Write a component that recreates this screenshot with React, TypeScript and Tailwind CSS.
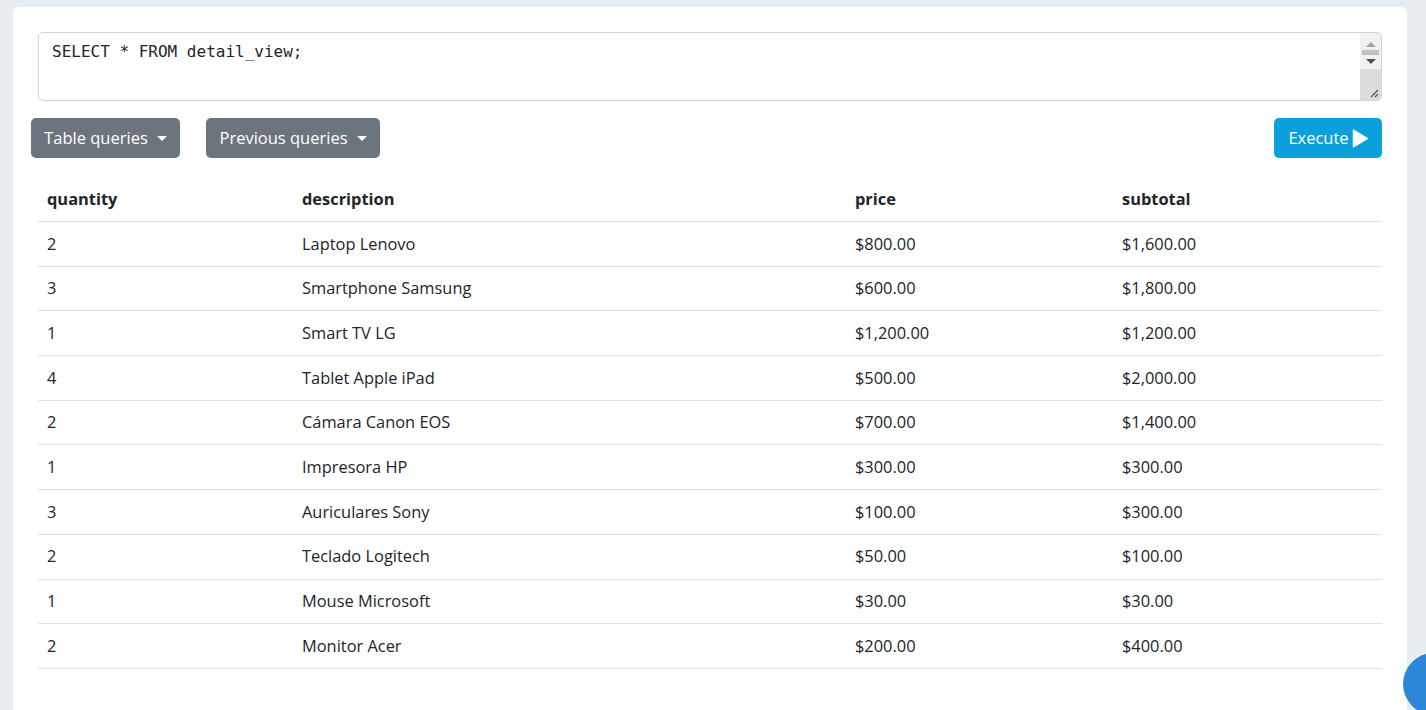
import React from "react";

const rows = [
  { q: 2, d: "Laptop Lenovo", p: "$800.00", s: "$1,600.00" },
  { q: 3, d: "Smartphone Samsung", p: "$600.00", s: "$1,800.00" },
  { q: 1, d: "Smart TV LG", p: "$1,200.00", s: "$1,200.00" },
  { q: 4, d: "Tablet Apple iPad", p: "$500.00", s: "$2,000.00" },
  { q: 2, d: "Cámara Canon EOS", p: "$700.00", s: "$1,400.00" },
  { q: 1, d: "Impresora HP", p: "$300.00", s: "$300.00" },
  { q: 3, d: "Auriculares Sony", p: "$100.00", s: "$300.00" },
  { q: 2, d: "Teclado Logitech", p: "$50.00", s: "$100.00" },
  { q: 1, d: "Mouse Microsoft", p: "$30.00", s: "$30.00" },
  { q: 2, d: "Monitor Acer", p: "$200.00", s: "$400.00" },
];

const cols = "grid grid-cols-[255px_553px_267px_1fr] items-center";

function Caret() {
  return (
    <span className="ml-[9px] inline-block h-0 w-0 border-x-[5px] border-t-[5px] border-x-transparent border-t-white align-middle" />
  );
}

export default function App() {
  return (
    <div
      className="relative h-[710px] w-full overflow-hidden bg-[#e7edf1] pl-[13px] pr-[19px] pt-[7px] text-[#212529]"
      style={{ fontFamily: '"Open Sans", "Noto Sans", sans-serif' }}
    >
      <div className="h-[720px] rounded-md bg-white pt-[25px]">
        {/* query box */}
        <div className="mx-[25px] flex h-[69px] overflow-hidden rounded-[5px] border border-[#ced4da]">
          <div className="flex-1 px-[13px] py-[7px] font-['DejaVu_Sans_Mono',monospace] text-[16px] leading-6 text-[#212529]">
            SELECT * FROM detail_view;
          </div>
          <div className="flex w-[21px] flex-col bg-[#f1f1f1]">
            <div className="flex h-[17px] items-end justify-center pb-[3px]">
              <span className="h-0 w-0 border-x-[5px] border-b-[5px] border-x-transparent border-b-[#a3a3a3]" />
            </div>
            <div className="mx-[2px] h-[5px] bg-[#c1c1c1]" />
            <div className="flex h-[14px] items-start justify-center pt-[4px]">
              <span className="h-0 w-0 border-x-[5px] border-t-[5px] border-x-transparent border-t-[#505050]" />
            </div>
            <div className="relative flex-1 bg-[#dcdcdc]">
              <svg className="absolute bottom-[2px] right-[2px]" width="10" height="10" viewBox="0 0 10 10">
                <path d="M9 2 L2 9 M9 6 L6 9" stroke="#555" strokeWidth="1.2" />
              </svg>
            </div>
          </div>
        </div>

        {/* buttons */}
        <div className="mt-[17px] flex items-center pl-[18px] pr-[25px]">
          <button className="flex h-10 w-[149px] items-center justify-center rounded-[5px] bg-[#6c757d] text-[16.5px] text-white">
            Table queries
            <Caret />
          </button>
          <button className="ml-[26px] flex h-10 w-[174px] items-center justify-center rounded-[5px] bg-[#6c757d] text-[16.5px] text-white">
            Previous queries
            <Caret />
          </button>
          <button className="ml-auto flex h-10 w-[108px] items-center justify-center gap-[3px] rounded-[5px] bg-[#0b9fdc] text-[16.5px] text-white">
            Execute
            <svg width="16" height="19" viewBox="0 0 16 19">
              <path d="M1.5 1.2 L15 9.5 L1.5 17.8 Z" fill="white" stroke="white" strokeLinejoin="round" strokeWidth="1.5" />
            </svg>
          </button>
        </div>

        {/* results */}
        <div className="mx-[25px] mt-[20px] text-[16.4px]">
          <div className={`${cols} h-[44px] border-b border-[#dee2e6] font-bold`}>
            <div className="pl-[9px]">quantity</div>
            <div className="pl-[9px]">description</div>
            <div className="pl-[9px]">price</div>
            <div className="pl-[9px]">subtotal</div>
          </div>
          {rows.map((r) => (
            <div key={r.d} className={`${cols} h-[44.7px] border-b border-[#dee2e6]`}>
              <div className="pl-[9px]">{r.q}</div>
              <div className="pl-[9px]">{r.d}</div>
              <div className="pl-[9px]">{r.p}</div>
              <div className="pl-[9px]">{r.s}</div>
            </div>
          ))}
        </div>
      </div>

      {/* floating button */}
      <div className="absolute left-[1403px] top-[653px] h-[62px] w-[62px] rounded-full bg-[#2d86d6]" />
    </div>
  );
}
